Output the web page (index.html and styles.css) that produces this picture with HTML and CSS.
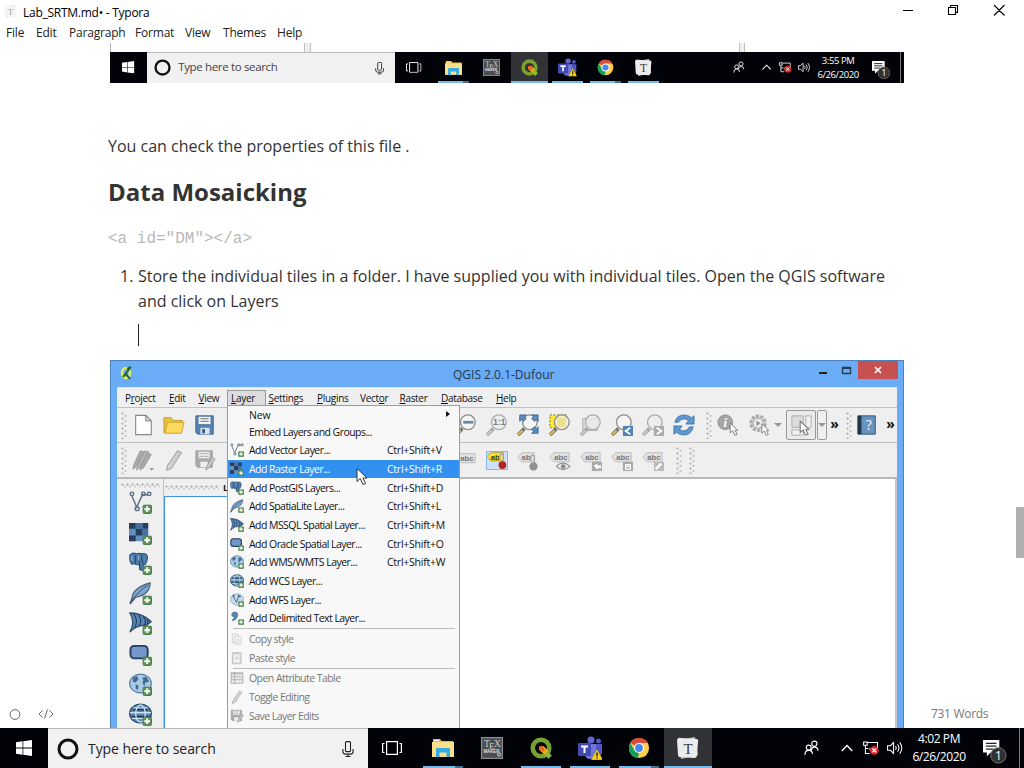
FILE: index.html
```html
<!DOCTYPE html>
<html lang="en">
<head>
<meta charset="utf-8">
<title>Lab_SRTM.md - Typora</title>
<link rel="stylesheet" href="styles.css">
</head>
<body>
<svg class="defs" width="0" height="0" aria-hidden="true">
  <!-- taskbar icons -->
  <symbol id="win" viewBox="0 0 16 16"><path fill="#fff" d="M0 2.3 6.6 1.3V7.6H0zM7.3 1.2 16 0V7.6H7.3zM0 8.4H6.6V14.7L0 13.7zM7.3 8.4H16V16L7.3 14.8z"/></symbol>
  <symbol id="cortana" viewBox="0 0 22 22"><circle cx="11" cy="11" r="9" fill="none" stroke="#111" stroke-width="3"/></symbol>
  <symbol id="mic" viewBox="0 0 12 16"><g fill="none" stroke="#222" stroke-width="1.1"><rect x="3.5" y=".6" width="5" height="10" rx="1"/><path d="M.9 8v2.5q0 2.6 2.6 2.6h5q2.6 0 2.6-2.6V8M6 13v3M3.5 15.5h5"/></g></symbol>
  <symbol id="taskview" viewBox="0 0 20 14"><path fill="none" stroke="#fff" stroke-width="1.2" d="M4.600 .6H15.400V13.400H4.600zM2.500 2.500H.6V11.500H2.500M17.500 2.500H19.400V11.500H17.500"/></symbol>
  <symbol id="explorer" viewBox="0 0 22 18"><path fill="#f5bd28" d="M1 0h7l1.500 2H21v4H1z"/><path fill="#fbe08c" d="M0 3h22v15H0z"/><path fill="#fff" d="M2 1h5v1H2z"/><path fill="#34ade5" d="M4 10q0-1 1-1h12q1 0 1 1v8h-3.500v-4.500h-7V18H4z"/></symbol>
  <symbol id="tex" viewBox="0 0 22 22"><rect x=".6" y=".6" width="20.800" height="20.800" fill="#4b4d50" stroke="#8c8e91" stroke-width="1.200"/><text x="3" y="10" font-size="9.500" fill="#ccc" class="serif">T</text><text x="8" y="12" font-size="9" fill="#ccc" class="serif">E</text><text x="13" y="10" font-size="9.500" fill="#ccc" class="serif">X</text><text x="2.500" y="15.500" font-size="4.500" textLength="16" fill="#ddd" class="bold">MAKER</text><circle cx="18" cy="17.500" r="1.500" fill="none" stroke="#ddd"/></symbol>
  <symbol id="qgis" viewBox="0 0 24 24"><circle cx="12" cy="12" r="9" fill="none" stroke="#78a22f" stroke-width="5"/><path d="M13 13 22 22" stroke="#8dba3c" stroke-width="5"/><path fill="#f3a51c" d="M10 10h5l5 5-4 4-6-5z"/><path fill="#e4642a" d="M10 10h4l2 4-2 2-4-3z"/></symbol>
  <symbol id="teams" viewBox="0 0 24 24"><circle cx="13" cy="4" r="3.500" fill="#6268cd"/><circle cx="20.500" cy="5" r="2.500" fill="#5057bd"/><path fill="#5158c5" d="M15 8h9v8q0 4-4 4h-5z"/><path fill="#7177dc" d="M7 8h11v10q-1 5-6 5t-5-6z"/><rect y="7" width="13" height="13" rx="1" fill="#444bb0"/><path stroke="#fff" stroke-width="2" d="M3 10.500h7M6.500 10.500V17"/><path fill="#fcd116" stroke="#6d5d18" stroke-width=".4" d="M19 13 25 24H13z"/><path stroke="#222" stroke-width="1.400" d="M19 16.500v4M19 21.500v1.300"/></symbol>
  <symbol id="chrome" viewBox="0 0 24 24"><circle cx="12" cy="12" r="11" fill="#ffce43"/><path fill="#dc4b3e" d="M12 12 2.500 6.500A11 11 0 0 1 21.500 6.500H12z"/><path fill="#169d58" d="M2.500 6.500 7.300 14.800 12 17 11 23A11 11 0 0 1 2.500 6.500z"/><circle cx="12" cy="12" r="5.500" fill="#fff"/><circle cx="12" cy="12" r="4.300" fill="#4688ed"/></symbol>
  <symbol id="typora" viewBox="0 0 22 22"><path fill="#bdbdbd" d="M2 3 18 0 21 18 4 22z"/><path fill="#ececec" d="M0 3Q1 0 4 1L19 2q3 0 2 3L20 18q0 3-3 3L3 20q-2 0-2-2z"/><text x="11" y="16.500" font-size="15" text-anchor="middle" fill="#3c3c3c" class="serif">T</text></symbol>
  <symbol id="people" viewBox="0 0 16 16"><g fill="none" stroke="#fff" stroke-width="1.200"><circle cx="5" cy="7.500" r="2.600"/><path d="M1 15.500q0-5 4-5t4 4M7.500 10.500q1-3.500 3.500-3.500 4 0 4 4"/><circle cx="11" cy="3.500" r="2.800"/></g></symbol>
  <symbol id="chev" viewBox="0 0 12 8"><path fill="none" stroke="#fff" stroke-width="1.300" d="M.7 7 6 1.500 11.300 7"/></symbol>
  <symbol id="net" viewBox="0 0 17 15"><g fill="none" stroke="#fff" stroke-width="1.100"><path d="M5 1.500h10.500v7H6M.6 1h3.800v3.500H.6zM2.500 4.500v9H7M2.500 8h3"/></g><circle cx="12" cy="10" r="4.700" fill="#e5262d"/><path stroke="#fff" stroke-width="1.300" d="m10 8 4 4m0-4-4 4"/></symbol>
  <symbol id="vol" viewBox="0 0 17 14"><path fill="none" stroke="#fff" stroke-width="1.100" d="M.6 4.500h3L7 1.200v11.600L3.600 9.500h-3zM9 5q1.500 2 0 4M11.200 3q3 4 0 8M13.500 1q4.500 6 0 12"/></symbol>
  <symbol id="note" viewBox="0 0 25 25"><path fill="#fff" d="M0 0h17v13H8l-4 4v-4H0z"/><path stroke="#222" stroke-width="1.300" d="M3 3.500h11M3 6.500h11M3 9.500h8"/><circle cx="16" cy="16" r="8" fill="#303133" stroke="#777" stroke-width="1"/><text x="16" y="20.500" font-size="12.500" text-anchor="middle" fill="#fff" class="sans">1</text></symbol>

  <!-- data source icons -->
  <symbol id="plus" viewBox="0 0 10 10"><rect x=".5" y=".5" width="9" height="9" rx="1.500" fill="#5d9259" stroke="#49794a"/><path stroke="#fff" stroke-width="2" d="M5 2v6M2 5h6"/></symbol>
  <symbol id="vector" viewBox="0 0 24 24"><g fill="none" stroke="#5a6f85" stroke-width="1.500"><path d="M3 5 8 17 14 4h6"/><circle cx="3" cy="3" r="1.800"/><circle cx="15" cy="3" r="1.800"/><circle cx="21" cy="3" r="1.800"/><circle cx="8.500" cy="18.500" r="2"/></g><use href="#plus" x="14" y="14" width="10" height="10"/></symbol>
  <symbol id="raster" viewBox="0 0 24 24"><path fill="#6690bf" d="M0 1h20v19H0z"/><path fill="#253e5b" d="M0 1h7v6H0zM7 7h7v7H7zM0 14h7v6H0zM14 1h6v6h-6z"/><path fill="#456f9f" d="M7 1h7v6H7zM14 7h6v7h-6z"/><use href="#plus" x="14" y="14" width="10" height="10"/></symbol>
  <symbol id="postgis" viewBox="0 0 24 24"><path fill="#4e7cab" stroke="#31577f" stroke-width="1.200" d="M1 3q3-3 7-1 3-1 6 0 4-1 5 2 1 4-2 9h-2v5q-2 2-4 0v-5q-4 1-5-1l-3 1Q0 10 1 3z"/><path fill="none" stroke="#24476b" stroke-width="1.100" d="M6 3q2 5 0 9M14 3q-2 5 1 9M10 10q2 1 1 6"/><path stroke="#9fc0e0" d="M3 4v5M10 4v4"/><use href="#plus" x="14" y="14" width="10" height="10"/></symbol>
  <symbol id="feather" viewBox="0 0 24 24"><path fill="#7da5cd" stroke="#49617a" stroke-width="1.300" d="M3 17Q4 6 22 1q0 12-15 15l-6 7z"/><path fill="none" stroke="#33506e" d="M1 22Q9 10 20 3"/><use href="#plus" x="14" y="14" width="10" height="10"/></symbol>
  <symbol id="mssql" viewBox="0 0 24 24"><path fill="#5b87b6" stroke="#31516f" stroke-width="1.500" d="M1 1q13 0 22 9l-5 4Q8 13 1 21 7 11 1 1z"/><path fill="none" stroke="#233f5c" stroke-width="1.200" d="M5 2q5 7 1 14M10 3q4 6 1 11M15 5q4 5 1 9M19 8q2 3 0 5"/><use href="#plus" x="14" y="14" width="10" height="10"/></symbol>
  <symbol id="oracle" viewBox="0 0 24 24"><rect x="1.500" y="3" width="18" height="13" rx="4" fill="#7397c8" stroke="#253d61" stroke-width="2"/><use href="#plus" x="14" y="14" width="10" height="10"/></symbol>
  <symbol id="wms" viewBox="0 0 24 24"><ellipse cx="12" cy="11" rx="11.300" ry="9.800" fill="#a9c9e8" stroke="#597d9f" stroke-width="1.200"/><path fill="#41698f" d="M4 5l4-2 2 3-3 4-3-1zM7 12l3 1-1 5-2-2zM14 5l4-1 3 5-4 1-1 4-2-4 1-2z"/><use href="#plus" x="14" y="14" width="10" height="10"/></symbol>
  <symbol id="wcs" viewBox="0 0 24 24"><ellipse cx="12" cy="11" rx="11.300" ry="9.800" fill="#6690b7" stroke="#294b6c" stroke-width="1.400"/><path fill="#254362" d="M4 5h16v3H4zM2 13h20v3H4z"/><g fill="none" stroke="#cee4f6" stroke-width="1.300"><ellipse cx="12" cy="11" rx="5" ry="9"/><path d="M1 10h22M3 16h18M4 5h16"/></g><use href="#plus" x="14" y="14" width="10" height="10"/></symbol>
  <symbol id="wfs" viewBox="0 0 24 24"><ellipse cx="12" cy="11" rx="11.300" ry="9.800" fill="#c5dbed" stroke="#7896b4"/><g fill="none" stroke="#465d75" stroke-width="1.500"><path d="m6 6 5 10 4-10h4"/><circle cx="6" cy="5" r="1.500"/><circle cx="15" cy="5" r="1.500"/></g><use href="#plus" x="14" y="14" width="10" height="10"/></symbol>
  <symbol id="comma" viewBox="0 0 24 24"><path fill="#5787b5" stroke="#315b81" d="M6 2q8-1 7 6-1 6-8 9l-1-2q4-2 4-5-5 0-5-4 0-3 3-4z"/><use href="#plus" x="14" y="14" width="10" height="10"/></symbol>
  <symbol id="copy" viewBox="0 0 24 24"><path fill="#f7f7f7" stroke="#c3c3c3" stroke-width="1.200" d="M4 3h8l3 3v12H4z"/><path fill="#f7f7f7" stroke="#c3c3c3" stroke-width="1.200" d="M8 7h8l3 3v11H8z"/><path stroke="#ccc" d="M10 12h7M10 15h7M10 18h7"/></symbol>
  <symbol id="paste" viewBox="0 0 24 24"><path fill="#ddd" stroke="#bcbcbc" stroke-width="1.400" d="M4 3h15v19H4z"/><path fill="#f7f7f7" d="M7 7h9v12H7z"/><path stroke="#bbb" stroke-width="1.500" d="M8 3h7M9 11h5M9 14h5"/></symbol>
  <symbol id="table" viewBox="0 0 24 24"><path fill="#eee" stroke="#aaa" stroke-width="1.500" d="M2 3h20v18H2z"/><path stroke="#aaa" stroke-width="1.500" d="M2 5h20M2 10h20M2 15h20M8 3v18"/></symbol>
  <symbol id="pencil" viewBox="0 0 24 24"><path fill="#ddd" stroke="#ababab" stroke-width="1.400" d="M16 2l4 2L9 21l-5 2 1-5z"/><path stroke="#bbb" d="M18 3 7 20"/></symbol>
  <symbol id="pencils" viewBox="0 0 24 24"><path fill="#aaa" stroke="#999" d="m9 2 4 1L5 19l-4 3 1-5z"/><path fill="#b5b5b5" stroke="#999" d="m14 2 4 1L9 20l-4 3 1-5z"/><path fill="#aaa" stroke="#999" d="m17 4 4 2-8 14-4 3 1-5z"/><path fill="#888" d="M19 21h5l-2.500 2.500z"/></symbol>
  <symbol id="saveedit" viewBox="0 0 24 24"><path fill="#aaa" stroke="#a0a0a0" d="M2 2h18v18H4l-2-2z"/><path fill="#eee" d="M5 3h12v7H5zM7 14h8v6H7z"/><path stroke="#aaa" d="M6 5h10M6 8h10"/><path fill="#ccc" stroke="#999" d="m20 9 3 2-7 10-3 2 1-4z"/></symbol>

  <!-- main toolbar icons -->
  <symbol id="newdoc" viewBox="0 0 24 24"><path fill="#fff" stroke="#888" stroke-width="1.200" d="M4 1.500h11l6 6V22.500H4z"/><path fill="#ddd" stroke="#777" d="M15 1.500v6h6z"/></symbol>
  <symbol id="folder" viewBox="0 0 24 24"><path fill="#eac13e" stroke="#c6982b" d="M1 21V4h8l2 3h10v4"/><path fill="#fbda5d" stroke="#cba032" d="m2 21 3-12h18l-3 12z"/></symbol>
  <symbol id="save" viewBox="0 0 24 24"><path fill="#5480b3" stroke="#42658a" d="M2 2h19v20H4l-2-2z"/><path fill="#f2f2ec" d="M5 3h13v8H5z"/><path stroke="#8c9188" stroke-width="1.300" d="M7 5h9M7 8h9"/><path fill="#dce3e9" d="M7 15h10v7H7z"/><path fill="#315780" d="M9 16.500h3V21H9z"/></symbol>
  <symbol id="lens" viewBox="0 0 24 24"><path stroke="#737373" stroke-width="4" d="M1 23 8 16"/><path stroke="#e8ba39" stroke-width="2.200" d="M1 23 6 18"/><circle cx="14" cy="9" r="8" fill="#f6f6f4" fill-opacity=".8" stroke="#8f8f8f" stroke-width="1.500"/></symbol>
  <symbol id="lensgrey" viewBox="0 0 24 24"><path stroke="#a5a5a5" stroke-width="4" d="M1 23 8 16"/><path stroke="#ccc" stroke-width="2" d="M1 23 6 18"/><circle cx="14" cy="9" r="8" fill="#ececec" fill-opacity=".8" stroke="#adadad" stroke-width="1.500"/></symbol>
  <symbol id="zoomout" viewBox="0 0 24 24"><use href="#lens"/><path stroke="#6688ac" stroke-width="3" d="M9 9h11"/></symbol>
  <symbol id="zoom11" viewBox="0 0 24 24"><use href="#lensgrey"/><text x="14.500" y="12.500" font-size="9" text-anchor="middle" fill="#777" class="bold">1:1</text></symbol>
  <symbol id="zoomfull" viewBox="0 0 24 24"><use href="#lens"/><path fill="#5e8bc0" stroke="#41648e" d="M3 1h7L8 3l2 2-3 3-2-2-2 2zM16 1h7v7l-2-2-2 2-3-3 2-2zM16 21l2-2-2-2 3-3 2 2 2-2v7z"/></symbol>
  <symbol id="zoomsel" viewBox="0 0 24 24"><path fill="#ffe93e" stroke="#665d17" stroke-dasharray="2 2" d="M1 1h18v14H1z"/><use href="#lens"/><path fill="#e8d875" d="M9 4h9v10H9z" opacity=".7"/></symbol>
  <symbol id="zoomlayer" viewBox="0 0 24 24"><path fill="#ddd" stroke="#aaa" d="M3 5h16v13H3z"/><use href="#lensgrey"/></symbol>
  <symbol id="zoomlast" viewBox="0 0 24 24"><use href="#lens"/><path fill="#5384b9" d="M13 13h11v11H13z"/><path fill="none" stroke="#fff" stroke-width="2" d="m21 15-5 3.500 5 3.500"/></symbol>
  <symbol id="zoomnext" viewBox="0 0 24 24"><use href="#lensgrey"/><path fill="#aaa" d="M13 13h11v11H13z"/><path fill="none" stroke="#fff" stroke-width="2" d="m16 15 5 3.500-5 3.500"/></symbol>
  <symbol id="refresh" viewBox="0 0 24 24"><path fill="#5f97d0" stroke="#36699f" stroke-width=".8" d="M2 9Q4 1 12 1q5 0 8 3l3-2v9h-9l3-4Q10 3 6 9zM22 14q-2 9-10 9-5 0-8-3l-3 2v-9h9l-3 4q7 4 11-3z"/></symbol>
  <symbol id="arrow" viewBox="0 0 12 18"><path fill="#fff" stroke="#777" stroke-width="1.200" d="M1 1v13l3.500-3L7 17l3-1-2.500-5.500H11z"/></symbol>
  <symbol id="identify" viewBox="0 0 24 24"><circle cx="9" cy="9" r="8" fill="#a5a5a5" stroke="#8c8c8c"/><text x="9" y="14" font-size="14" text-anchor="middle" fill="#fff" class="serif ital">i</text><use href="#arrow" x="13" y="9" width="11" height="15"/></symbol>
  <symbol id="action" viewBox="0 0 24 24"><circle cx="11" cy="10" r="8" fill="#ddd" stroke="#aaa" stroke-width="3" stroke-dasharray="3.500 1.500"/><circle cx="11" cy="10" r="5.500" fill="#eee" stroke="#999"/><path fill="#999" d="m9 7 5 3-5 3z"/><use href="#arrow" x="14" y="10" width="10" height="14"/></symbol>
  <symbol id="select" viewBox="0 0 24 24"><path fill="#dcdcdc" stroke="#a8a8a8" d="M1 1h13v13H1z"/><path fill="#f3f3f3" stroke="#a8a8a8" d="M17 1h6v13h-6zM1 17h13v6H1z"/><use href="#arrow" x="8" y="6" width="15" height="18"/></symbol>
  <symbol id="help" viewBox="0 0 24 24"><path fill="#6793c1" stroke="#2e4b67" d="M2 2h19v20H2z"/><path fill="#22384d" d="M2 2h4v20H2z"/><text x="14" y="17" font-size="15" text-anchor="middle" fill="#fff" class="serif">?</text></symbol>
  <symbol id="tag" viewBox="0 0 24 24"><path fill="#e1e1e1" stroke="#bbb" d="m1 7 4-5h17v10H5z"/><text x="13" y="10" font-size="8.500" text-anchor="middle" fill="#777" class="bold">abc</text></symbol>
  <symbol id="tagonly" viewBox="0 -3 24 24"><use href="#tag" width="24" height="24"/></symbol>
  <symbol id="tagpin" viewBox="0 1 24 21"><path fill="#ffe235" stroke="#af9b24" d="m1 7 4-4h14v9H5z"/><text x="10" y="10.500" font-size="8.500" text-anchor="middle" fill="#333" class="bold">ab</text><path fill="none" stroke="#aaa" stroke-width="1.500" d="M15 12V6q2-3 4 0v8"/><circle cx="18" cy="16.500" r="4.300" fill="#b62123"/></symbol>
  <symbol id="taggrey" viewBox="0 -2 24 24"><path fill="#e1e1e1" stroke="#bbb" d="m1 7 4-5h14v10H5z"/><text x="10" y="10" font-size="8.500" text-anchor="middle" fill="#777" class="bold">ab</text><path fill="none" stroke="#aaa" stroke-width="1.500" d="M15 12V6q2-3 4 0v8"/><circle cx="18" cy="17" r="4.500" fill="#919191"/></symbol>
  <symbol id="tageye" viewBox="0 -2 24 24"><use href="#tag" width="24" height="24"/><path fill="#eee" stroke="#929292" stroke-width="1.300" d="M8 17q7-7 15 0-8 7-15 0z"/><circle cx="15.500" cy="17" r="2.500" fill="#888"/></symbol>
  <symbol id="tagmove" viewBox="0 -2 24 24"><use href="#tag" width="24" height="24"/><path fill="#aaa" d="M13 12h11v10H13z"/><path fill="#fff" d="m15 16 4-2v2h4v3h-4v2z"/></symbol>
  <symbol id="tagrot" viewBox="0 -2 24 24"><use href="#tag" width="24" height="24"/><path fill="#aaa" d="M13 12h11v10H13z"/><path fill="none" stroke="#fff" stroke-width="1.500" d="M16 20v-5h5v5zM17 17h3"/></symbol>
  <symbol id="tagedit" viewBox="0 -2 24 24"><use href="#tag" width="24" height="24"/><path fill="#bbb" d="M13 12h11v10H13z"/><path stroke="#fff" stroke-width="2.500" d="m15 20 6-6"/></symbol>
</svg>

<header class="titlebar">
  <svg class="app-icon"><use href="#typora"/></svg>
  <span class="app-title">Lab_SRTM.md• - Typora</span>
  <svg class="win-buttons" viewBox="0 0 108 22"><g fill="none" stroke="#000" stroke-width="1.100"><path d="M2 10.500h10M47.500 7.500h7v7h-7zM49.500 7.500v-2h7v7h-2M93 5l10.500 10.500M103.500 5 93 15.500"/></g></svg>
</header>
<nav class="menubar">
  <span>File</span><span>Edit</span><span>Paragraph</span><span>Format</span><span>View</span><span>Themes</span><span>Help</span>
</nav>

<main class="editor">
  <article class="page">
    <figure class="shot-top">
      <div class="shot-edge"><i class="e1"></i><i class="e3"></i></div>
      <div class="taskbar small">
        <div class="start"><svg class="i-win"><use href="#win"/></svg></div>
        <div class="search"><svg class="i-cortana"><use href="#cortana"/></svg><span class="search-text">Type here to search</span><svg class="i-mic"><use href="#mic"/></svg></div>
        <div class="app view"><svg class="i-view"><use href="#taskview"/></svg></div>
        <div class="app open multi"><svg class="i-folder"><use href="#explorer"/></svg></div>
        <div class="app"><svg class="i-app"><use href="#tex"/></svg></div>
        <div class="app open active"><svg class="i-app"><use href="#qgis"/></svg></div>
        <div class="app open"><svg class="i-teams"><use href="#teams"/></svg></div>
        <div class="app open multi"><svg class="i-app"><use href="#chrome"/></svg></div>
        <div class="app open"><svg class="i-app"><use href="#typora"/></svg></div>
        <div class="tray">
          <div class="cell wide"><svg class="i-people"><use href="#people"/></svg></div>
          <div class="cell"><svg class="i-chev"><use href="#chev"/></svg></div>
          <div class="cell"><svg class="i-net"><use href="#net"/></svg></div>
          <div class="cell"><svg class="i-net"><use href="#vol"/></svg></div>
          <div class="clock"><span>3:55 PM</span><span>6/26/2020</span></div>
          <div class="notes"><svg class="i-note"><use href="#note"/></svg></div>
        </div>
      </div>
    </figure>
    <p class="para">You can check the properties of this file .</p>
    <h2 class="heading">Data Mosaicking</h2>
    <p class="raw">&lt;a id="DM"&gt;&lt;/a&gt;</p>
    <div class="item"><span class="num">1.</span><div class="item-text">Store the individual tiles in a folder. I have supplied you with individual tiles. Open the QGIS software<br>and click on Layers</div></div>
    <div class="caret"></div>

    <figure class="qgis">
      <div class="q-title"><svg class="q-logo" viewBox="0 0 12 14"><ellipse cx="6" cy="7" rx="4" ry="5" fill="none" stroke="#e3ef4b" stroke-width="2.500"/><path stroke="#285f26" stroke-width="2" d="M3 11 10 2M7 3l4-2M6 8l4 5"/></svg><span>QGIS 2.0.1-Dufour</span>
        <svg class="q-buttons" viewBox="0 0 85 18"><path fill="#222" d="M5 11h8v2H5z"/><path fill="none" stroke="#263b53" stroke-width="1.300" d="M28.500 6.500h8v6h-8z"/><path stroke="#263b53" stroke-width="2" d="M28 7h9"/><path fill="#c75050" d="M44 0h40v18H44z"/><path stroke="#fff" stroke-width="1.700" d="m61 6 6 6m0-6-6 6"/></svg>
      </div>
      <div class="q-inner">
        <div class="q-menu"><span>P<u>r</u>oject</span><span><u>E</u>dit</span><span><u>V</u>iew</span><span class="current"><u>L</u>ayer</span><span><u>S</u>ettings</span><span><u>P</u>lugins</span><span>Vect<u>o</u>r</span><span><u>R</u>aster</span><span><u>D</u>atabase</span><span><u>H</u>elp</span></div>
        <div class="q-tools">
          <i class="grip"></i><svg><use href="#newdoc"/></svg><svg><use href="#folder"/></svg><svg class="before-menu"><use href="#save"/></svg>
          <svg><use href="#zoomout"/></svg><svg><use href="#zoom11"/></svg><svg><use href="#zoomfull"/></svg><svg><use href="#zoomsel"/></svg><svg><use href="#zoomlayer"/></svg><svg><use href="#zoomlast"/></svg><svg><use href="#zoomnext"/></svg><svg><use href="#refresh"/></svg>
          <i class="grip g2"></i><svg><use href="#identify"/></svg><svg><use href="#action"/></svg><i class="drop"></i>
          <div class="boxed"><svg><use href="#select"/></svg></div><div class="boxed-drop"><i class="drop"></i></div><b class="more">»</b>
          <i class="grip g3"></i><svg class="helpicon"><use href="#help"/></svg><b class="more">»</b>
        </div>
        <div class="q-tools second">
          <i class="grip"></i><svg><use href="#pencils"/></svg><svg><use href="#pencil"/></svg><svg class="before-menu"><use href="#saveedit"/></svg>
          <svg><use href="#tagonly"/></svg><svg class="picked"><use href="#tagpin"/></svg><svg><use href="#taggrey"/></svg><svg><use href="#tageye"/></svg><svg><use href="#tagmove"/></svg><svg><use href="#tagrot"/></svg><svg><use href="#tagedit"/></svg>
          <i class="grip g4"></i><i class="grip g5"></i>
        </div>
        <div class="q-body">
          <div class="q-side"><i class="hgrip"></i><svg><use href="#vector"/></svg><svg><use href="#raster"/></svg><svg><use href="#postgis"/></svg><svg><use href="#feather"/></svg><svg><use href="#mssql"/></svg><svg><use href="#oracle"/></svg><svg><use href="#wms"/></svg><svg><use href="#wcs"/></svg></div>
          <div class="q-panel"><div class="q-panel-head"><i class="hgrip"></i><span>L</span></div><div class="q-tree"></div></div>
          <div class="q-canvas"></div>
        </div>
      </div>

      <div class="dropdown">
        <div class="row new"><i></i><span>New</span><em class="sub"></em></div>
        <div class="row embed"><i></i><span>Embed Layers and Groups...</span></div>
        <div class="row"><svg><use href="#vector"/></svg><span>Add Vector Layer...</span><kbd>Ctrl+Shift+V</kbd></div>
        <div class="row hot"><svg><use href="#raster"/></svg><span>Add Raster Layer...</span><kbd>Ctrl+Shift+R</kbd></div>
        <div class="row"><svg><use href="#postgis"/></svg><span>Add PostGIS Layers...</span><kbd>Ctrl+Shift+D</kbd></div>
        <div class="row"><svg><use href="#feather"/></svg><span>Add SpatiaLite Layer...</span><kbd>Ctrl+Shift+L</kbd></div>
        <div class="row"><svg><use href="#mssql"/></svg><span>Add MSSQL Spatial Layer...</span><kbd>Ctrl+Shift+M</kbd></div>
        <div class="row"><svg><use href="#oracle"/></svg><span>Add Oracle Spatial Layer...</span><kbd>Ctrl+Shift+O</kbd></div>
        <div class="row"><svg><use href="#wms"/></svg><span>Add WMS/WMTS Layer...</span><kbd>Ctrl+Shift+W</kbd></div>
        <div class="row"><svg><use href="#wcs"/></svg><span>Add WCS Layer...</span></div>
        <div class="row"><svg><use href="#wfs"/></svg><span>Add WFS Layer...</span></div>
        <div class="row"><svg><use href="#comma"/></svg><span>Add Delimited Text Layer...</span></div>
        <hr>
        <div class="row off"><svg><use href="#copy"/></svg><span>Copy style</span></div>
        <div class="row off"><svg><use href="#paste"/></svg><span>Paste style</span></div>
        <hr>
        <div class="row off"><svg><use href="#table"/></svg><span>Open Attribute Table</span></div>
        <div class="row off"><svg><use href="#pencil"/></svg><span>Toggle Editing</span></div>
        <div class="row off"><svg><use href="#saveedit"/></svg><span>Save Layer Edits</span></div>
      </div>
      <svg class="pointer" viewBox="0 0 12 18"><path fill="#fff" stroke="#333" d="M1 1v13l3.200-3L7 17l2.500-1L7 10.500h4z"/></svg>
    </figure>
  </article>
  <svg class="status-left" viewBox="0 0 50 14"><g fill="none" stroke="#666"><circle cx="7" cy="7.500" r="4.900"/><path d="M34.500 3.500 31 7l3.500 3.500M41.500 3.500 45 7l-3.500 3.500M39.500 2.500l-3 9"/></g></svg>
  <span class="words">731 Words</span>
  <div class="scroll-thumb"></div>
</main>

<footer class="taskbar">
  <div class="start"><svg class="i-win"><use href="#win"/></svg></div>
  <div class="search"><svg class="i-cortana"><use href="#cortana"/></svg><span class="search-text">Type here to search</span><svg class="i-mic"><use href="#mic"/></svg></div>
  <div class="app view"><svg class="i-view"><use href="#taskview"/></svg></div>
  <div class="app open multi"><svg class="i-folder"><use href="#explorer"/></svg></div>
  <div class="app"><svg class="i-app"><use href="#tex"/></svg></div>
  <div class="app open"><svg class="i-app"><use href="#qgis"/></svg></div>
  <div class="app open"><svg class="i-teams"><use href="#teams"/></svg></div>
  <div class="app open multi"><svg class="i-app"><use href="#chrome"/></svg></div>
  <div class="app open active"><svg class="i-app"><use href="#typora"/></svg></div>
  <div class="tray">
    <div class="cell wide"><svg class="i-people"><use href="#people"/></svg></div>
    <div class="cell"><svg class="i-chev"><use href="#chev"/></svg></div>
    <div class="cell"><svg class="i-net"><use href="#net"/></svg></div>
    <div class="cell"><svg class="i-net"><use href="#vol"/></svg></div>
    <div class="clock"><span>4:02 PM</span><span>6/26/2020</span></div>
    <div class="notes"><svg class="i-note"><use href="#note"/></svg></div>
  </div>
</footer>
</body>
</html>
```
FILE: styles.css
```css
* { box-sizing: border-box; }
body { margin: 0; width: 1024px; height: 768px; overflow: hidden; display: flex; flex-direction: column; background: #fff; color: #333; font-family: "Open Sans", "Noto Sans", sans-serif; }
svg { display: block; flex: none; overflow: visible; }
.defs { display: none; }
.serif { font-family: "Liberation Serif", serif; }
.bold { font-family: "Liberation Sans", sans-serif; font-weight: 700; letter-spacing: 0; }
.sans { font-family: "Open Sans", sans-serif; letter-spacing: 0; }
.ital { font-style: italic; font-weight: 700; }
i, em { font-style: normal; }
p, h2, figure { margin: 0; }

/* Editor window chrome */
.titlebar { height: 22px; flex: none; display: flex; align-items: center; padding-left: 4px; color: #000; font-size: 12px; }
.app-icon { width: 13px; height: 13px; margin-right: 6px; opacity: .5; }
.app-title { letter-spacing: -.26px; line-height: 20px; padding-top: 3px; }
.win-buttons { width: 108px; height: 22px; margin-left: auto; margin-right: 15px; }
.menubar { height: 21px; flex: none; display: grid; grid-template-columns: 30px 33px 66px 50px 38px 54px 40px; padding-left: 6px; font-size: 12px; line-height: 22px; color: #222; letter-spacing: -.2px; white-space: nowrap; }
.editor { position: relative; height: 685px; flex: none; overflow: hidden; }
.page { padding-left: 108px; display: flex; flex-direction: column; }

/* First embedded picture */
.shot-top { width: 794px; margin-left: 2px; height: 40px; }
.shot-edge { height: 9px; display: flex; border-left: 1px solid #bbb; }
.shot-edge i { height: 9px; background: #eee; border: solid #c2c2c2; border-width: 0 1px; }
.e1 { width: 7px; margin-left: 193px; }
.e3 { width: 6px; margin-left: 428px; }

/* Task bar, drawn at two scales through --u */
.taskbar { --u: 1px; height: calc(var(--u) * 40); flex: none; display: flex; background: #020308; color: #fff; gap: var(--u); }
.taskbar.small { --u: .775px; }
.start { width: calc(var(--u) * 48); display: grid; place-items: center; margin-right: calc(var(--u) * -1); }
.search { width: calc(var(--u) * 320); background: #f1f1f1; border-top: 1px solid #b9b9b9; display: flex; align-items: center; padding: 0 calc(var(--u) * 14) 0 calc(var(--u) * 9); color: #222; margin-right: calc(var(--u) * -1); }
.search-text { font-size: 14px; letter-spacing: -.06px; margin-left: 9px; }
.small .search-text { font-size: 11.500px; line-height: 14px; margin: -2px 0 0 7px; letter-spacing: -.35px; color: #444; }
.i-mic { width: calc(var(--u) * 12); height: calc(var(--u) * 16); margin-left: auto; }
.i-cortana { width: calc(var(--u) * 22); height: calc(var(--u) * 22); }
.i-win { width: calc(var(--u) * 16); height: calc(var(--u) * 16); }
.app { width: calc(var(--u) * 48); padding-top: 2px; display: grid; place-items: center; grid-template-rows: 1fr 2px; }
.app.view { margin-right: calc(var(--u) * 2); }
.app.open::after { content: ""; width: calc(var(--u) * 40); height: 2px; background: #76b9ed; }
.app.multi::after { background: linear-gradient(90deg, #76b9ed 80%, #47708f 80%); }
.app.active { background: #323336; }
.app.active::after { width: 100%; }
.i-app { width: calc(var(--u) * 22); height: calc(var(--u) * 22); }
.i-teams { width: calc(var(--u) * 24); height: calc(var(--u) * 24); }
.i-folder { width: calc(var(--u) * 22); height: calc(var(--u) * 18); }
.i-view { width: calc(var(--u) * 20); height: calc(var(--u) * 14); }
.tray { margin-left: auto; display: flex; padding-right: calc(var(--u) * 4); }
.cell { width: calc(var(--u) * 24); display: grid; place-items: center; }
.cell.wide { width: calc(var(--u) * 48); }
.i-people { width: calc(var(--u) * 15); height: calc(var(--u) * 16); }
.i-chev { width: calc(var(--u) * 12); height: calc(var(--u) * 8); }
.i-net { width: calc(var(--u) * 16); height: calc(var(--u) * 14); }
.clock { width: calc(var(--u) * 64); display: flex; flex-direction: column; align-items: center; justify-content: center; font-size: 12px; line-height: 18px; letter-spacing: -.4px; white-space: nowrap; }
.small .clock { font-size: 9.500px; line-height: 14px; letter-spacing: -.4px; }
.notes { width: calc(var(--u) * 49); border-right: 1px solid #777; padding: calc(var(--u) * 12) 0 0 calc(var(--u) * 12); }
.i-note { width: calc(var(--u) * 24); height: calc(var(--u) * 24); }

/* Document text */
.para { margin-top: 51px; font-size: 16px; line-height: 25px; }
.heading { margin-top: 16px; font-size: 24px; line-height: 34px; }
.raw { margin-top: 18px; font: 16px/25px "Liberation Mono", monospace; color: #b8b8b8; }
.item { margin-top: 12px; display: flex; font-size: 16px; line-height: 25px; white-space: nowrap; }
.num { width: 30px; padding-left: 12px; }
.caret { width: 1px; height: 22px; margin: 10px 0 14px 30px; background: #222; }

/* Embedded map application picture */
.qgis { position: relative; width: 794px; height: 380px; margin-left: 2px; background: #6aacf6; border: 1px solid #4c83bd; display: flex; flex-direction: column; color: #111; }
.q-title { height: 26px; flex: none; display: flex; font-size: 12px; line-height: 27px; color: #26384d; }
.q-logo { width: 12px; height: 14px; margin: 5px 0 0 9px; }
.q-title span { margin-left: 321px; }
.q-buttons { width: 85px; height: 18px; margin-left: auto; margin-right: 4px; }
.q-inner { margin: 0 6px; height: 354px; background: #efefef; display: flex; flex-direction: column; border-top: 1px solid #d9e8f9; }
.q-menu { height: 20px; flex: none; display: grid; grid-template-columns: 44px 29.500px 32.500px 37.500px 48.500px 43px 39.500px 41.500px 55px 40px; padding-left: 8px; font-size: 10px; line-height: 20px; letter-spacing: -.3px; white-space: nowrap; border-bottom: 1px solid #c1c1c1; }
.q-menu u { text-underline-offset: 1px; }
.q-menu .current { background: #ddd; border: 1px solid #999; margin: 2px 3px 0 -4px; padding-left: 3px; line-height: 15px; }
.q-tools { height: 35px; flex: none; display: flex; align-items: center; border-bottom: 1px solid #c1c1c1; padding-left: 4px; }
.q-tools > svg { width: 22px; height: 22px; margin: 0 4.600px; }
.q-tools > .before-menu { margin-right: 234.500px; }
.grip { width: 6px; height: 27px; margin-right: 0; background: radial-gradient(circle at 1.500px 1.500px, #c2c2c2 1px, transparent 1.200px) 0 0 / 6px 5px, radial-gradient(circle at 4.500px 4px, #c2c2c2 1px, transparent 1.200px) 0 0 / 6px 5px; }
.grip.g2 { margin: 0 0 0 6px; }
.drop { width: 0; height: 0; border: 4px solid transparent; border-top-color: #999; border-bottom: 0; }
.boxed { width: 30px; height: 30px; border: 1px solid #999; border-radius: 2px; margin-left: 4px; display: grid; place-items: center; background: #ebebeb; }
.boxed svg { width: 21px; height: 21px; }
.boxed-drop { width: 10px; height: 30px; border: 1px solid #999; border-radius: 2px; margin-left: 1px; display: grid; place-items: center; }
.more { width: 8px; font-size: 14px; line-height: 20px; margin: -3px 0 0 3px; color: #111; }
.grip.g3 { margin: 0 0 0 8px; }
.q-tools > .helpicon { margin: 0 5px 0 4px; }
.grip.g4 { margin-left: 7px; }
.grip.g5 { margin-left: 7px; }
.q-tools > .picked { height: 19px; background: #cde2fa; outline: 1px solid #8ab6ec; outline-offset: -1px; }
.second { height: 36px; border-bottom: 2px solid #b9b9b9; }
.q-body { flex: 1; display: flex; min-height: 0; }
.q-side { width: 47px; display: flex; flex-direction: column; align-items: center; gap: 7.300px; border-right: 1px solid #c0c0c0; padding: 4px 0 0; }
.q-side svg { width: 23px; height: 23px; }
.hgrip { display: block; width: 39px; height: 5px; margin-bottom: -4px; background: radial-gradient(circle at 1.500px 1.500px, #bcbcbc 1px, transparent 1.200px) 0 0 / 5px 5px, radial-gradient(circle at 4px 3.500px, #c9c9c9 1px, transparent 1.200px) 0 0 / 5px 5px; }
.q-panel { width: 64px; display: flex; flex-direction: column; }
.q-panel-head { height: 17px; display: flex; gap: 4px; align-items: center; padding-left: 1px; font-size: 9px; font-weight: 700; }
.q-panel-head .hgrip { width: 54px; margin: 0; }
.q-tree { flex: 1; background: #fff; border: solid #3e92e8; border-width: 1px 0 0 1px; }
.q-canvas { flex: 1; background: #fff; border-right: 2px solid #c5c5c5; }

.dropdown { position: absolute; left: 116px; top: 44px; width: 233px; height: 340px; background: #f8f8f8; border: 1px solid #9b9b9b; border-bottom: 0; font-size: 10.500px; letter-spacing: -.55px; white-space: nowrap; }
.row { height: 18.700px; display: grid; grid-template-columns: 21px 138px 1fr; align-items: center; color: #111; }
.row.new { height: 18px; letter-spacing: -.2px; }
.row.embed { height: 16.900px; }
.row svg { width: 14px; height: 14px; margin-left: 2px; }
.row kbd { font: inherit; letter-spacing: -.25px; }
.row.hot { background: #3290f0; color: #fff; }
.row.off { color: #777; }
.sub { width: 0; height: 0; border: 3px solid transparent; border-left: 4px solid #111; border-right: 0; margin: -3px 0 0 59px; }
.dropdown hr { height: 1px; margin: .5px 4px .5px 5px; border: 0; background: #bdbdbd; }
.pointer { position: absolute; left: 245px; top: 106px; width: 12px; height: 19px; }

/* Floating editor controls */
.status-left { position: absolute; left: 8px; top: 664px; width: 50px; height: 14px; }
.words { position: absolute; left: 931px; top: 662px; font-size: 12px; line-height: 17px; letter-spacing: -.3px; color: #777; }
.scroll-thumb { position: absolute; right: 0; top: 464px; width: 8px; height: 51px; background: #b0b0b0; }
```
